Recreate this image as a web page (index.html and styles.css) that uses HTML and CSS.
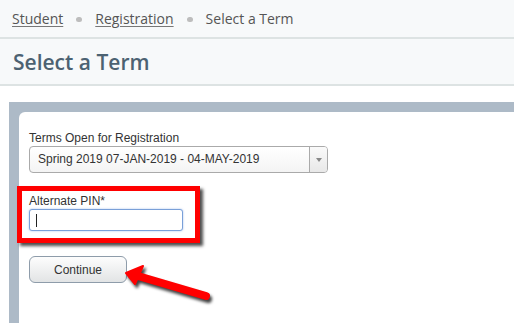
FILE: index.html
```html
<!DOCTYPE html>
<html lang="en">
<head>
<meta charset="utf-8">
<title>Select a Term</title>
<link rel="stylesheet" href="styles.css">
</head>
<body>
<nav class="crumbs">
  <a href="#" class="crumb-link">Student</a>
  <span class="dot"></span>
  <a href="#" class="crumb-link">Registration</a>
  <span class="dot"></span>
  <span class="crumb-current">Select a Term</span>
</nav>
<header class="page-header">
  <h1 class="page-title">Select a Term</h1>
</header>
<main class="frame">
  <section class="panel">
    <label class="field-label">Terms Open for Registration</label>
    <div class="select">
      <span class="select-text">Spring 2019 07-JAN-2019 - 04-MAY-2019</span>
      <span class="select-arrow"><span class="tri"></span></span>
    </div>
    <div class="pin-field">
      <div class="highlight"></div>
      <label class="field-label">Alternate PIN*</label>
      <div class="input"><span class="caret"></span></div>
    </div>
    <div class="button-row">
      <button class="btn" type="button">Continue</button>
      <svg class="pointer" width="110" height="60" viewBox="0 0 110 60">
        <g fill="#ff0000" stroke="#ff0000">
          <line x1="28" y1="26" x2="96" y2="46" stroke-width="8" stroke-linecap="round"/>
          <polygon points="16,23 33,16 25,34" stroke-width="2" stroke-linejoin="round"/>
        </g>
      </svg>
    </div>
  </section>
</main>
</body>
</html>
```

FILE: styles.css
```css
html, body {
  margin: 0;
  padding: 0;
  background: #ffffff;
  height: 100%;
  overflow: hidden;
}

body {
  font-family: "Liberation Sans", Arial, sans-serif;
  color: #333333;
}

.crumbs {
  display: flex;
  align-items: center;
  height: 37px;
  padding: 0 0 0 12px;
  background: #f7f9fa;
  border-bottom: 2px solid #dde3e3;
  font-family: "Open Sans", sans-serif;
  font-size: 14px;
  line-height: 20px;
  color: #555555;
  box-sizing: content-box;
}

.crumb-link {
  color: #555555;
  text-decoration: underline;
  text-decoration-color: #777777;
  text-underline-offset: 2px;
}

.crumb-current {
  color: #555555;
}

.dot {
  width: 6px;
  height: 5px;
  border-radius: 3px;
  background: #bdbdbd;
  margin: 2px 13px 0 13px;
}

.page-header {
  height: 45px;
  background: #f7f9fa;
  border-bottom: 2px solid #dde3e3;
  padding: 0 0 0 13px;
}

.page-title {
  margin: 0;
  padding-top: 9px;
  font-family: "Open Sans", sans-serif;
  font-size: 21px;
  font-weight: 600;
  line-height: 28px;
  color: #4c6272;
}

.frame {
  margin: 16px 0 0 9px;
  padding: 10px 0 0 10px;
  background: #adbac7;
  height: 221px;
  box-sizing: border-box;
}

.panel {
  background: #ffffff;
  border-top-left-radius: 6px;
  height: 100%;
  padding: 19px 0 0 10px;
  box-sizing: border-box;
}

.field-label {
  display: block;
  font-size: 12px;
  line-height: 14px;
  color: #333333;
}

.select {
  display: flex;
  width: 299px;
  height: 27px;
  margin-top: 1px;
  box-sizing: border-box;
  border: 1px solid #aaaaaa;
  border-radius: 4px;
  background: linear-gradient(#ffffff, #f4f4f4);
  font-size: 12px;
  color: #333333;
}

.select-text {
  flex: 1;
  padding-left: 8px;
  line-height: 25px;
}

.select-arrow {
  width: 17px;
  border-left: 1px solid #aaaaaa;
  display: flex;
  align-items: center;
  justify-content: center;
  background: linear-gradient(#fafafa, #e8e8e8);
  border-radius: 0 3px 3px 0;
}

.tri {
  width: 0;
  height: 0;
  border-left: 3px solid transparent;
  border-right: 3px solid transparent;
  border-top: 4px solid #888888;
  margin-top: 1px;
}

.pin-field {
  position: relative;
  margin-top: 21px;
  width: 154px;
}

.highlight {
  position: absolute;
  left: -12px;
  top: -8px;
  width: 183px;
  height: 57px;
  box-sizing: border-box;
  border: 5px solid #ff0000;
  box-shadow: 3px 3px 3px rgba(0, 0, 0, 0.7);
}

.input {
  position: relative;
  margin-top: 1px;
  width: 154px;
  height: 22px;
  box-sizing: border-box;
  border: 1px solid #7aa0d8;
  border-radius: 3px;
  box-shadow: 0 0 2px rgba(90, 140, 220, 0.6);
  background: #ffffff;
}

.caret {
  position: absolute;
  left: 6px;
  top: 4px;
  width: 1px;
  height: 13px;
  background: #222222;
}

.button-row {
  position: relative;
  margin-top: 25px;
}

.btn {
  display: block;
  width: 98px;
  height: 27px;
  padding: 0;
  border: 1px solid #8e9caa;
  border-radius: 6px;
  background: linear-gradient(#fdfdfd, #e2e4e5);
  font-family: "Liberation Sans", Arial, sans-serif;
  font-size: 12px;
  color: #333333;
}

.pointer {
  position: absolute;
  left: 81px;
  top: -6px;
  overflow: visible;
  filter: drop-shadow(2px 3px 1.5px rgba(0, 0, 0, 0.75));
}
```
